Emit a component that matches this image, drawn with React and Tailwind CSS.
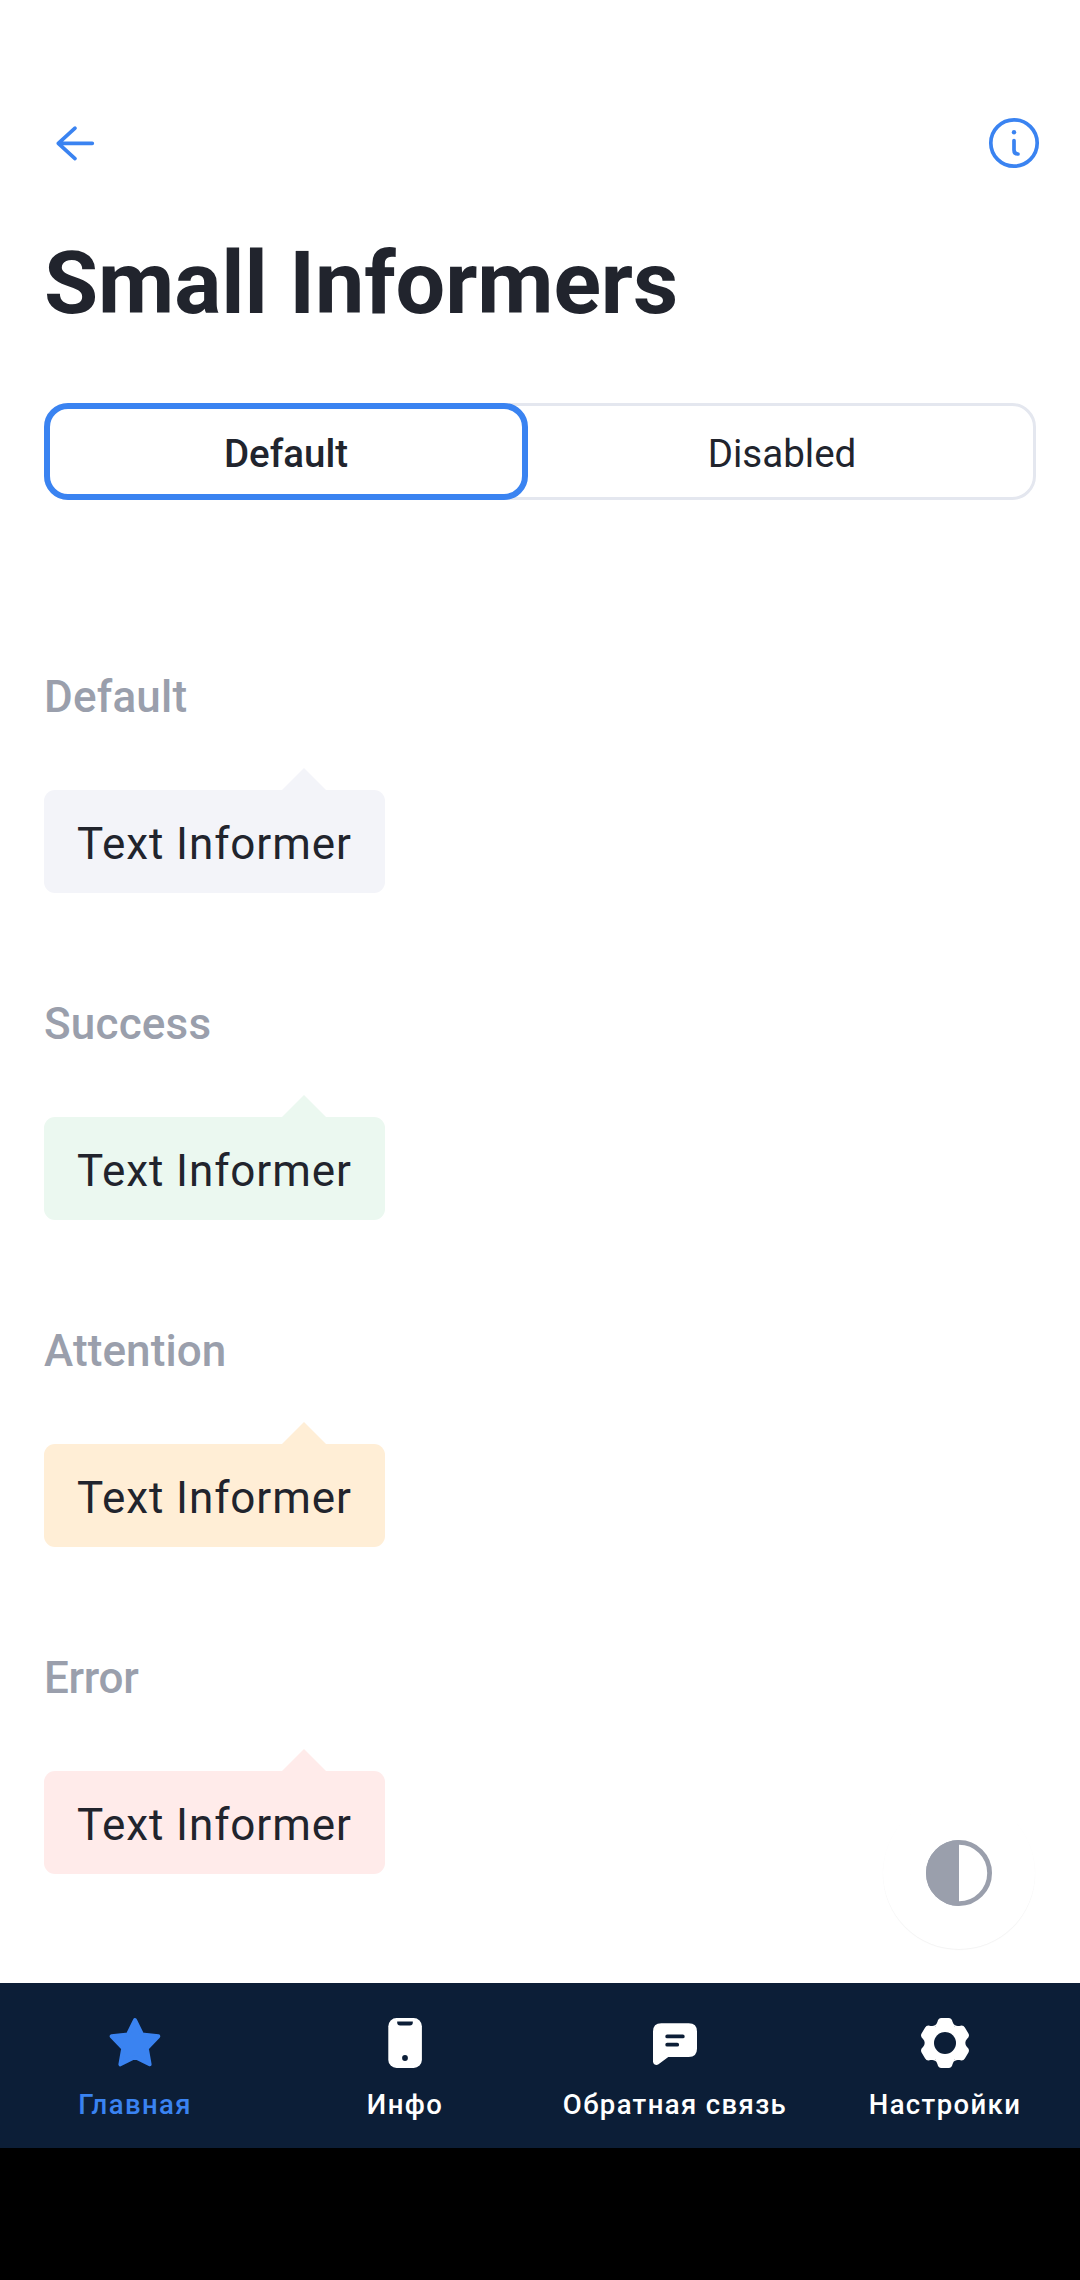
const items = [
  ['Default', 'bg-[#f3f4f9]', 'border-b-[#f3f4f9]', 'tracking-[0.2px]'],
  ['Success', 'bg-[#ebf8f0]', 'border-b-[#ebf8f0]', 'tracking-[0.2px]'],
  ['Attention', 'bg-[#ffeed6]', 'border-b-[#ffeed6]', 'tracking-[0.1px]'],
  ['Error', 'bg-[#ffebea]', 'border-b-[#ffebea]', 'tracking-[-0.3px]'],
];

function Star() {
  return (
    <svg width="54" height="54" viewBox="0 0 54 54">
      <path d="M27 5L34 19.4L50.3 21.3L38.8 33.3L41.6 49.3L27 42L12.4 49.3L15.2 33.3L3.7 21.3L20 19.4Z" fill="#3a83f1" stroke="#3a83f1" strokeWidth="4" strokeLinejoin="round" />
    </svg>
  );
}

function Phone() {
  return (
    <svg width="54" height="54" viewBox="0 0 54 54">
      <rect x="10.3" y="3" width="33.6" height="50" rx="8.3" fill="#fff" />
      <path d="M19.2 6.5H34.8V7.5Q34.8 10.5 31.8 10.5H22.2Q19.2 10.5 19.2 7.5Z" fill="#0c1e37" />
      <circle cx="27" cy="43" r="2.9" fill="#0c1e37" />
    </svg>
  );
}

function Chat() {
  return (
    <svg width="54" height="54" viewBox="0 0 54 54">
      <path d="M13.3 8.3H40.7Q49 8.3 49 16.6V33.7Q49 42 40.7 42H20.3L10.5 49.3Q8.7 50.6 6.6 49.6Q5 48.7 5 46.5V16.6Q5 8.3 13.3 8.3Z" fill="#fff" />
      <path d="M19.2 21.4H34.8M19.2 29.7H29.2" stroke="#0c1e37" strokeWidth="3.8" strokeLinecap="round" />
    </svg>
  );
}

function Gear() {
  return (
    <svg width="54" height="54" viewBox="0 0 54 54">
      <g transform="translate(27 28)" fill="#fff">
        {[0, 60, 120, 180, 240, 300].map((a) => (
          <path key={a} transform={`rotate(${a})`} d="M-10.2 -17.6Q-8.3 -18.6 -7.6 -21Q-6.8 -25 -3.6 -25H3.6Q6.8 -25 7.6 -21Q8.3 -18.6 10.2 -17.6L0 0Z" />
        ))}
        <circle r="13" fill="none" stroke="#fff" strokeWidth="11" />
        <circle r="11" fill="#0c1e37" />
      </g>
    </svg>
  );
}

const tabs = [['Главная', Star], ['Инфо', Phone], ['Обратная связь', Chat], ['Настройки', Gear]];

export default function App() {
  return (
    <div className="flex h-[2280px] w-[1080px] flex-col overflow-hidden bg-white font-[Roboto,sans-serif] text-[#21242d]">
      <main className="relative h-[1983px] px-[44px] pt-[107px]">
        <div className="flex h-[72px] items-center justify-between">
          <svg width="60" height="60" viewBox="0 0 60 60" fill="none" stroke="#3a83f1" strokeWidth="3.7" strokeLinecap="round" strokeLinejoin="round">
            <path d="M48.3 30.3H14.3M31 15.2L14.3 30.3L31 45.6" />
          </svg>
          <svg className="-mr-[5px]" width="54" height="54" viewBox="0 0 54 54" fill="none" stroke="#3a83f1" strokeWidth="3.7" strokeLinecap="round">
            <circle cx="27" cy="27" r="23.2" />
            <path d="M27 24.5V34Q27 38 31 38" />
            <circle cx="27" cy="16.3" r="2.2" fill="#3a83f1" stroke="none" />
          </svg>
        </div>
        <h1 className="mt-[54px] h-[98px] text-[88px] leading-[100px] font-bold tracking-[-0.1px]">Small Informers</h1>
        <div className="mt-[72px] flex h-[97px] rounded-[24px] border-[3px] border-[#e4e7ef] text-[38.5px]">
          <div className="-m-[3px] flex w-[484px] items-center justify-center rounded-[24px] border-[6px] border-[#3a83f1] pt-[5px] font-medium">Default</div>
          <div className="flex flex-1 items-center justify-center pt-[5px] pl-[6px]">Disabled</div>
        </div>
        <div className="mt-[171px]">
          {items.map(([name, bg, tip, track]) => (
            <section key={name} className="h-[327px]">
              <h2 className={`h-[52px] text-[44px] leading-[52px] font-medium text-[#9a9fac] ${track}`}>{name}</h2>
              <div className={`mt-[45px] ml-[238px] h-[22px] w-[44px] border-x-[22px] border-b-[22px] border-x-transparent ${tip}`} />
              <div className={`flex h-[103px] w-[341px] items-center rounded-[11px] pt-[5px] pl-[33px] text-[44px] tracking-[0.9px] whitespace-nowrap ${bg}`}>Text Informer</div>
            </section>
          ))}
        </div>
        <button className="absolute right-[45px] bottom-[34px] flex h-[152px] w-[152px] items-center justify-center rounded-full bg-white shadow-[0_1px_1px_rgba(0,0,0,0.05)]">
          <svg width="66" height="66" viewBox="0 0 66 66">
            <circle cx="33" cy="33" r="30.6" fill="none" stroke="#9a9fac" strokeWidth="4.8" />
            <path d="M33 0A33 33 0 0 0 33 66Z" fill="#9a9fac" />
          </svg>
        </button>
      </main>
      <nav className="grid h-[165px] grid-cols-4 bg-[#0c1e37] pt-[32px] text-[27.5px] font-medium text-white">
        {tabs.map(([label, Icon], i) => (
          <div key={label} className={i ? 'flex flex-col items-center' : 'flex flex-col items-center text-[#3a83f1]'}>
            <Icon />
            <span className="mt-[20px] leading-[32px] tracking-[1.38px] whitespace-nowrap">{label}</span>
          </div>
        ))}
      </nav>
      <div className="h-[132px] bg-black" />
    </div>
  );
}
